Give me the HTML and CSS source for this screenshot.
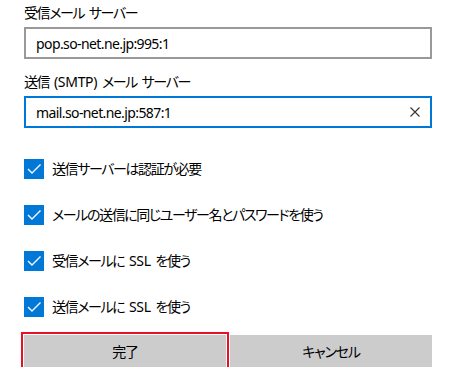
FILE: index.html
```html
<!DOCTYPE html>
<html lang="ja">
<head>
<meta charset="utf-8">
<link rel="stylesheet" href="styles.css">
</head>
<body>
<div class="form">
  <div class="field">
    <div class="label">受信メール サーバー</div>
    <div class="input">pop.so-net.ne.jp:995:1</div>
  </div>
  <div class="field field-2">
    <div class="label">送信 <span class="lat">(SMTP)</span> メール サーバー</div>
    <div class="input input-focus">
      <span>mail.so-net.ne.jp:587:1</span>
      <svg class="clear" width="10" height="10" viewBox="0 0 10 10"><path d="M0.5 0.5 L9.5 9.5 M9.5 0.5 L0.5 9.5" stroke="#333" stroke-width="1.1" fill="none"/></svg>
    </div>
  </div>
  <div class="checks">
    <div class="check">
      <span class="box"><svg width="20" height="20" viewBox="0 0 20 20"><path d="M4 10 L8 14 L16.5 5.5" stroke="#fff" stroke-width="1.4" fill="none"/></svg></span>
      <span class="ctext">送信サーバーは認証が必要</span>
    </div>
    <div class="check">
      <span class="box"><svg width="20" height="20" viewBox="0 0 20 20"><path d="M4 10 L8 14 L16.5 5.5" stroke="#fff" stroke-width="1.4" fill="none"/></svg></span>
      <span class="ctext">メールの送信に同じユーザー名とパスワードを使う</span>
    </div>
    <div class="check">
      <span class="box"><svg width="20" height="20" viewBox="0 0 20 20"><path d="M4 10 L8 14 L16.5 5.5" stroke="#fff" stroke-width="1.4" fill="none"/></svg></span>
      <span class="ctext">受信メールに <span class="lat">SSL</span> を使う</span>
    </div>
    <div class="check">
      <span class="box"><svg width="20" height="20" viewBox="0 0 20 20"><path d="M4 10 L8 14 L16.5 5.5" stroke="#fff" stroke-width="1.4" fill="none"/></svg></span>
      <span class="ctext">送信メールに <span class="lat">SSL</span> を使う</span>
    </div>
  </div>
  <div class="buttons">
    <div class="btn btn-focus">完了</div>
    <div class="btn">キャンセル</div>
  </div>
</div>
</body>
</html>
```

FILE: styles.css
```css
html, body {
  margin: 0;
  padding: 0;
  background: #fff;
}
body {
  font-family: "Noto Sans", "Noto Sans CJK JP", sans-serif;
  font-size: 14px;
  color: #000;
  font-feature-settings: "palt";
}
.form {
  width: 408px;
  padding: 3px 0 0 24px;
}
.label {
  height: 20px;
  line-height: 20px;
  margin-bottom: 4px;
  letter-spacing: -1.4px;
  word-spacing: 2.5px;
}
.lat {
  letter-spacing: -0.3px;
}
.field-2 {
  margin-top: 13px;
}
.input {
  box-sizing: border-box;
  height: 32px;
  border: 2px solid #999;
  padding: 0 10px;
  display: flex;
  align-items: center;
  justify-content: space-between;
  font-size: 14px;
  letter-spacing: -0.6px;
}
.input-focus {
  border-color: #0078d7;
}
.checks {
  display: flex;
  flex-direction: column;
  gap: 26px;
  margin-top: 31px;
}
.check {
  display: flex;
  align-items: center;
  height: 20px;
}
.box {
  width: 20px;
  height: 20px;
  background: #0078d7;
  display: flex;
  flex: none;
}
.ctext {
  margin-left: 8px;
  line-height: 20px;
  letter-spacing: -1.4px;
  word-spacing: 2.5px;
}
.buttons {
  display: flex;
  gap: 4px;
  margin-top: 18px;
}
.btn {
  flex: 1;
  height: 32px;
  background: #ccc;
  display: flex;
  align-items: center;
  justify-content: center;
  letter-spacing: -1.2px;
}
.btn-focus {
  outline: 2px solid #e81123;
  outline-offset: 1px;
}
```
